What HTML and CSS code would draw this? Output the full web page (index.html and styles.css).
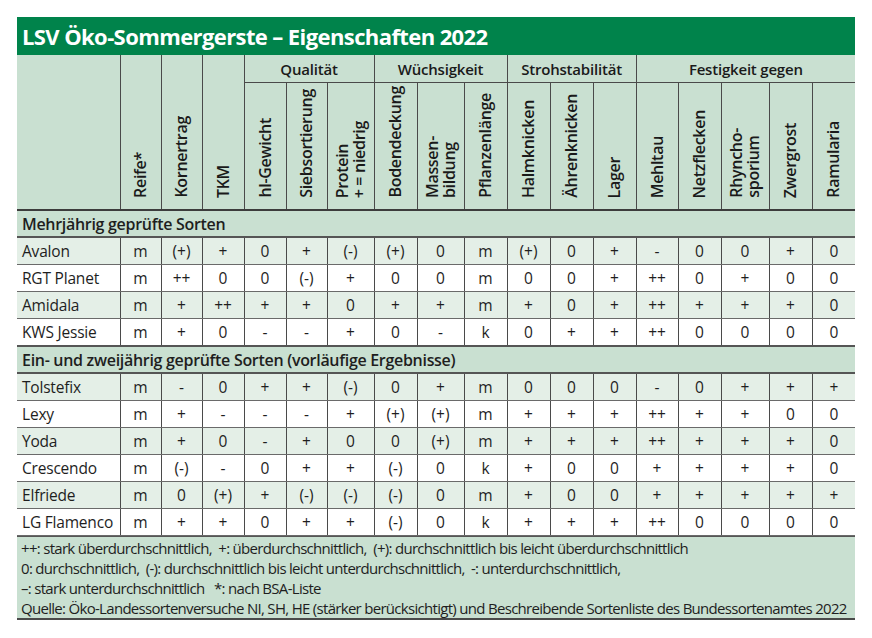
FILE: index.html
```html
<!DOCTYPE html>
<html lang="de">
<head>
<meta charset="utf-8">
<title>LSV Öko-Sommergerste – Eigenschaften 2022</title>
<link rel="stylesheet" href="styles.css">
</head>
<body>
<div class="sheet">
  <div class="title">LSV Öko-Sommergerste – Eigenschaften 2022</div>
  <table class="grid">
    <colgroup>
      <col style="width:103px"><col style="width:41px"><col style="width:41px"><col style="width:42px">
      <col style="width:42px"><col style="width:41px"><col style="width:47px">
      <col style="width:43px"><col style="width:47px"><col style="width:43px">
      <col style="width:43px"><col style="width:43px"><col style="width:43px">
      <col style="width:42px"><col style="width:43px"><col style="width:48px"><col style="width:43px"><col style="width:43px">
    </colgroup>
    <thead>
      <tr class="groups">
        <th rowspan="2" class="blank first"></th>
        <th rowspan="2" class="vh"><span>Reife*</span></th>
        <th rowspan="2" class="vh"><span>Kornertrag</span></th>
        <th rowspan="2" class="vh"><span>TKM</span></th>
        <th colspan="3" class="grp">Qualität</th>
        <th colspan="3" class="grp">Wüchsigkeit</th>
        <th colspan="3" class="grp">Strohstabilität</th>
        <th colspan="5" class="grp last">Festigkeit gegen</th>
      </tr>
      <tr class="labels">
        <th class="vh"><span>hl-Gewicht</span></th>
        <th class="vh"><span>Siebsortierung</span></th>
        <th class="vh"><span>Protein<br>+ = niedrig</span></th>
        <th class="vh"><span>Bodendeckung</span></th>
        <th class="vh"><span>Massen-<br>bildung</span></th>
        <th class="vh"><span>Pflanzenlänge</span></th>
        <th class="vh"><span>Halmknicken</span></th>
        <th class="vh"><span>Ährenknicken</span></th>
        <th class="vh"><span>Lager</span></th>
        <th class="vh"><span>Mehltau</span></th>
        <th class="vh"><span>Netzflecken</span></th>
        <th class="vh"><span>Rhyncho-<br>sporium</span></th>
        <th class="vh"><span>Zwergrost</span></th>
        <th class="vh last"><span>Ramularia</span></th>
      </tr>
    </thead>
    <tbody>
      <tr class="section"><td colspan="18">Mehrjährig geprüfte Sorten</td></tr>
      <tr class="alt"><td>Avalon</td><td>m</td><td>(+)</td><td>+</td><td>0</td><td>+</td><td>(-)</td><td>(+)</td><td>0</td><td>m</td><td>(+)</td><td>0</td><td>+</td><td>-</td><td>0</td><td>0</td><td>+</td><td>0</td></tr>
      <tr><td>RGT Planet</td><td>m</td><td>++</td><td>0</td><td>0</td><td>(-)</td><td>+</td><td>0</td><td>0</td><td>m</td><td>0</td><td>0</td><td>+</td><td>++</td><td>0</td><td>+</td><td>0</td><td>0</td></tr>
      <tr class="alt"><td>Amidala</td><td>m</td><td>+</td><td>++</td><td>+</td><td>+</td><td>0</td><td>+</td><td>+</td><td>m</td><td>+</td><td>0</td><td>+</td><td>++</td><td>+</td><td>+</td><td>+</td><td>0</td></tr>
      <tr><td>KWS Jessie</td><td>m</td><td>+</td><td>0</td><td>-</td><td>-</td><td>+</td><td>0</td><td>-</td><td>k</td><td>0</td><td>+</td><td>+</td><td>++</td><td>0</td><td>0</td><td>0</td><td>0</td></tr>
      <tr class="section"><td colspan="18">Ein- und zweijährig geprüfte Sorten (vorläufige Ergebnisse)</td></tr>
      <tr class="alt"><td>Tolstefix</td><td>m</td><td>-</td><td>0</td><td>+</td><td>+</td><td>(-)</td><td>0</td><td>+</td><td>m</td><td>0</td><td>0</td><td>0</td><td>-</td><td>0</td><td>+</td><td>+</td><td>+</td></tr>
      <tr><td>Lexy</td><td>m</td><td>+</td><td>-</td><td>-</td><td>-</td><td>+</td><td>(+)</td><td>(+)</td><td>m</td><td>+</td><td>+</td><td>+</td><td>++</td><td>+</td><td>+</td><td>0</td><td>0</td></tr>
      <tr class="alt"><td>Yoda</td><td>m</td><td>+</td><td>0</td><td>-</td><td>+</td><td>0</td><td>0</td><td>(+)</td><td>m</td><td>+</td><td>+</td><td>+</td><td>++</td><td>+</td><td>+</td><td>+</td><td>0</td></tr>
      <tr><td>Crescendo</td><td>m</td><td>(-)</td><td>-</td><td>0</td><td>+</td><td>+</td><td>(-)</td><td>0</td><td>k</td><td>+</td><td>0</td><td>0</td><td>+</td><td>+</td><td>+</td><td>+</td><td>0</td></tr>
      <tr class="alt"><td>Elfriede</td><td>m</td><td>0</td><td>(+)</td><td>+</td><td>(-)</td><td>(-)</td><td>(-)</td><td>0</td><td>m</td><td>+</td><td>0</td><td>0</td><td>+</td><td>+</td><td>+</td><td>+</td><td>+</td></tr>
      <tr><td>LG Flamenco</td><td>m</td><td>+</td><td>+</td><td>0</td><td>+</td><td>+</td><td>(-)</td><td>0</td><td>k</td><td>+</td><td>+</td><td>+</td><td>++</td><td>0</td><td>0</td><td>0</td><td>0</td></tr>
    </tbody>
  </table>
  <div class="notes">
    <p>++: stark überdurchschnittlich,&nbsp; +: überdurchschnittlich,&nbsp; (+): durchschnittlich bis leicht überdurchschnittlich</p>
    <p>0: durchschnittlich,&nbsp; (-): durchschnittlich bis leicht unterdurchschnittlich,&nbsp; -: unterdurchschnittlich,</p>
    <p>–: stark unterdurchschnittlich&nbsp;&nbsp; *: nach BSA-Liste</p>
    <p>Quelle: Öko-Landessortenversuche NI, SH, HE (stärker berücksichtigt) und Beschreibende Sortenliste des Bundessortenamtes 2022</p>
  </div>
</div>
</body>
</html>
```

FILE: styles.css
```css
html, body {
  margin: 0;
  padding: 0;
  background: #ffffff;
}

body {
  padding: 17px 0 0 17px;
  font-family: "Open Sans", "Noto Sans", sans-serif;
  color: #1e1e1e;
}

.sheet {
  width: 838px;
}

.title {
  height: 38px;
  background: #00834b;
  color: #ffffff;
  font-weight: 700;
  font-size: 22px;
  letter-spacing: -0.6px;
  line-height: 38px;
  padding-left: 5px;
}

.grid {
  width: 838px;
  table-layout: fixed;
  border-collapse: collapse;
  font-size: 15px;
}

.grid th,
.grid td {
  padding: 0;
  border-left: 1px solid #4a4a4a;
  text-align: center;
}

.grid th.first,
.grid td:first-child {
  border-left: none;
}

.grid thead th {
  background: #c9e0d1;
  font-weight: 600;
  color: #1a1a1a;
}

.groups th {
  height: 27px;
}

.grp {
  font-size: 15px;
  border-bottom: 1px solid #4a4a4a;
  letter-spacing: -0.2px;
}

.labels th {
  height: 119px;
}

.vh {
  vertical-align: bottom;
  padding-bottom: 7px !important;
}

.vh span {
  display: inline-block;
  writing-mode: vertical-rl;
  transform: rotate(180deg);
  text-align: start;
  line-height: 17px;
  font-size: 16px;
  letter-spacing: -0.3px;
}

.grid thead tr.labels th,
.grid thead tr.groups th[rowspan] {
  border-bottom: 2px solid #3c3c3c;
}

.grid tbody td {
  height: 26px;
  border-bottom: 1px solid #6a6a6a;
  font-size: 15.5px;
  background: #ffffff;
}

.grid tbody td:first-child {
  text-align: left;
  padding-left: 5px;
  font-size: 15.5px;
  letter-spacing: -0.2px;
}

.grid tbody tr.alt td {
  background: #e4efe7;
}

.grid tbody tr.section td {
  background: #c9e0d1;
  font-weight: 600;
  font-size: 16px;
  letter-spacing: -0.3px;
  border-top: 2px solid #555555;
  border-bottom: 2px solid #555555;
  height: 25px;
}

.notes {
  background: #c9e0d1;
  border-top: 1px solid #555555;
  border-bottom: 2px solid #4a4a4a;
  padding: 1px 0 0 4px;
  font-size: 15px;
  line-height: 20px;
  letter-spacing: -0.7px;
  color: #1e1e1e;
}

.notes p {
  margin: 0;
  white-space: nowrap;
}
```
